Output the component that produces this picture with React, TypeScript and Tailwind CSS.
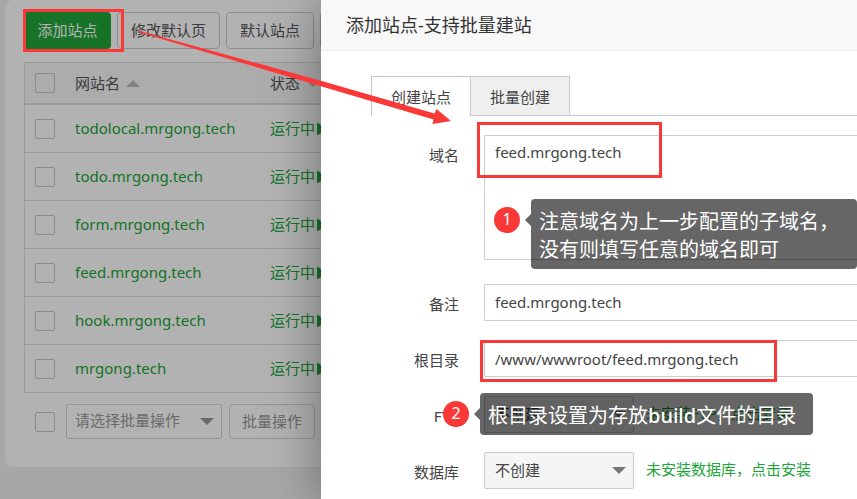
import React from "react";

const sites = [
  "todolocal.mrgong.tech",
  "todo.mrgong.tech",
  "form.mrgong.tech",
  "feed.mrgong.tech",
  "hook.mrgong.tech",
  "mrgong.tech",
];

function Checkbox({ label }: { label: string }) {
  return (
    <input
      type="checkbox"
      aria-label={label}
      className="block size-5 shrink-0 appearance-none rounded-xs border border-[#c8c8c8] checked:bg-[#20a53a]"
    />
  );
}

function Caret({ up = false, className = "" }: { up?: boolean; className?: string }) {
  return (
    <svg viewBox="0 0 14 7" className={`h-[7px] w-3.5 ${className}`} aria-hidden="true">
      <path d={up ? "M0 7L7 0L14 7Z" : "M0 0H14L7 7Z"} fill="currentColor" />
    </svg>
  );
}

function ToolButton({ children }: { children: React.ReactNode }) {
  return (
    <button type="button" className="h-[37px] rounded border border-[#ccc] px-[13px] text-[#555]">
      {children}
    </button>
  );
}

function SitesPage() {
  return (
    <main className="ml-[5px] rounded-lg bg-white pt-3 pb-7 pl-[19px] text-[15px]">
      <div className="flex gap-1.5 whitespace-nowrap">
        <button type="button" className="h-[37px] w-[87px] rounded bg-[#20a53a] text-white">
          添加站点
        </button>
        <ToolButton>修改默认页</ToolButton>
        <ToolButton>默认站点</ToolButton>
        <ToolButton>PHP命令行版本</ToolButton>
      </div>

      <table className="mt-[13px] w-full table-fixed border-separate border-spacing-0 border-t border-l border-[#ddd] text-left">
        <colgroup>
          <col className="w-[50px]" />
          <col className="w-[195px]" />
          <col />
        </colgroup>
        <thead className="bg-[#f6f6f6] text-[#555]">
          <tr className="h-[42px]">
            <th className="border-b-2 border-[#ddd] pl-2.5">
              <Checkbox label="全选" />
            </th>
            <th className="border-b-2 border-[#ddd] font-normal">
              <span className="flex items-center gap-1.5">
                网站名
                <Caret up className="text-[#bbb]" />
              </span>
            </th>
            <th className="border-b-2 border-[#ddd] font-normal">
              <span className="flex items-center gap-1.5">
                状态
                <Caret className="text-[#bbb]" />
              </span>
            </th>
          </tr>
        </thead>
        <tbody className="text-[#20a53a]">
          {sites.map((site) => (
            <tr key={site} className="h-12">
              <td className="border-b border-[#ddd] pl-2.5">
                <Checkbox label={site} />
              </td>
              <td className="border-b border-[#ddd]">
                <a href="#site">{site}</a>
              </td>
              <td className="border-b border-[#ddd]">
                <a href="#status" className="flex items-center gap-0.5">
                  运行中
                  <svg viewBox="0 0 10 12" className="h-3 w-2.5" aria-hidden="true">
                    <path d="M0 0H1L10 6L1 12H0Z" fill="currentColor" />
                  </svg>
                </a>
              </td>
            </tr>
          ))}
        </tbody>
      </table>

      <div className="mt-[11px] flex items-center pl-[11px] whitespace-nowrap">
        <Checkbox label="选择全部站点" />
        <div className="relative ml-[11px]">
          <select
            aria-label="批量操作类型"
            className="h-[35px] w-[156px] appearance-none rounded-xs border border-[#d4d4d4] pb-0.5 pl-2 text-[#999]"
          >
            <option>请选择批量操作</option>
          </select>
          <Caret className="pointer-events-none absolute top-3.5 right-2 text-[#999]" />
        </div>
        <button
          type="button"
          className="ml-[7px] h-[35px] rounded border border-[#d4d4d4] px-3 text-[#999]"
        >
          批量操作
        </button>
      </div>
    </main>
  );
}

function Field({
  id,
  label,
  children,
}: {
  id: string;
  label: string;
  children: React.ReactNode;
}) {
  return (
    <div className="mb-[19px] flex">
      <label htmlFor={id} className="mr-[25px] w-[138px] shrink-0 pt-2 text-right leading-6">
        {label}
      </label>
      {children}
    </div>
  );
}

function InstallSelect({ id, hint }: { id: string; hint: string }) {
  return (
    <div className="flex whitespace-nowrap">
      <div className="relative">
        <select
          id={id}
          className="h-[37px] w-[150px] appearance-none rounded-xs border border-[#ccc] bg-[#f5f5f5] pl-2.5"
        >
          <option>不创建</option>
        </select>
        <Caret className="pointer-events-none absolute top-[15px] right-2 text-[#777]" />
      </div>
      <a href="#install" className="ml-3 pt-[5px] leading-6 text-[#20a53a]">
        {hint}
      </a>
    </div>
  );
}

function AddSiteDialog() {
  return (
    <section
      role="dialog"
      aria-label="添加站点"
      className="ml-[321px] min-w-0 flex-1 bg-white text-[15px] text-[#444] shadow-[1px_1px_50px_rgba(0,0,0,0.4)]"
    >
      <h1 className="h-[51px] border-b border-[#eee] bg-[#f8f8f8] pl-[25px] text-lg leading-[51px] text-[#333]">
        添加站点-支持批量建站
      </h1>
      <div className="mt-[25px] ml-[50px] flex h-10">
        <button type="button" className="w-[99px] border-t border-l border-[#c5c5d8] pt-0.5">
          创建站点
        </button>
        <button type="button" className="w-[100px] border border-[#c5c5d8] bg-[#efefef] pt-0.5">
          批量创建
        </button>
        <div className="flex-1 border-b border-[#c5c5d8]" />
      </div>
      <form className="pt-[19px]">
        <div className="mb-6 flex">
          <label htmlFor="domain" className="mr-[25px] w-[138px] shrink-0 pt-2 text-right leading-6">
            域名
          </label>
          <textarea
            id="domain"
            defaultValue="feed.mrgong.tech"
            className="h-[125px] min-w-0 flex-1 resize-none rounded-l-xs border border-r-0 border-[#ccc] px-2.5 pt-1 leading-6"
          />
        </div>
        <Field id="remark" label="备注">
          <input
            id="remark"
            defaultValue="feed.mrgong.tech"
            className="h-[37px] min-w-0 flex-1 rounded-l-xs border border-r-0 border-[#ccc] px-2.5 pb-0.5"
          />
        </Field>
        <Field id="root-dir" label="根目录">
          <input
            id="root-dir"
            defaultValue="/www/wwwroot/feed.mrgong.tech"
            className="h-[37px] min-w-0 flex-1 rounded-l-xs border border-r-0 border-[#ccc] px-2.5"
          />
        </Field>
        <Field id="ftp" label="FTP">
          <InstallSelect id="ftp" hint="未安装FTP，点击安装" />
        </Field>
        <Field id="database" label="数据库">
          <InstallSelect id="database" hint="未安装数据库，点击安装" />
        </Field>
      </form>
    </section>
  );
}

function Note({
  step,
  className,
  children,
}: {
  step: number;
  className: string;
  children: React.ReactNode;
}) {
  return (
    <div className={`absolute flex whitespace-nowrap ${className}`}>
      <span className="mt-2 size-[26px] rounded-full bg-[#fb3838] text-center text-base leading-6 text-white">
        {step}
      </span>
      <svg viewBox="0 0 6 12" className="mt-[15px] ml-[5px] h-3 w-1.5" aria-hidden="true">
        <path d="M6 0V12L0 6Z" fill="black" fillOpacity="0.6" />
      </svg>
      <p className="rounded-sm bg-black/60 px-2 pt-[9px] pb-[5px] text-xl leading-7 text-white">
        {children}
      </p>
    </div>
  );
}

function Annotations() {
  return (
    <div className="pointer-events-none absolute inset-0">
      <div className="absolute top-[9px] left-[23px] h-[43px] w-[101px] border-3 border-[#fb3838]" />
      <div className="absolute top-[122px] left-[477px] h-14 w-[185px] border-3 border-[#fb3838]" />
      <div className="absolute top-[340px] left-[480px] h-[42px] w-[297px] border-3 border-[#fb3838]" />
      <svg viewBox="0 0 460 130" className="absolute top-0 left-0 h-[130px] w-[460px]" aria-hidden="true">
        <path
          d="M138 30.5L320 80.5L434.5 113.5L436.5 109L451 121L432.5 124L433.5 119.5L320 86L138 32Z"
          fill="#fb3838"
        />
      </svg>
      <Note step={1} className="top-[199px] left-[494px]">
        <span className="block w-[310px]">
          注意域名为上一步配置的子域名，
          <br />
          没有则填写任意的域名即可
        </span>
      </Note>
      <Note step={2} className="top-[393px] left-[443px]">
        <span className="block w-[317px]">
          根目录设置为存放<span className="font-medium">build</span>文件的目录
        </span>
      </Note>
    </div>
  );
}

export default function App() {
  return (
    <div className="relative min-h-screen overflow-hidden bg-[#f0f0f0] font-['Noto_Sans','Noto_Sans_CJK_SC',sans-serif]">
      <SitesPage />
      <div className="absolute inset-0 flex bg-black/30">
        <AddSiteDialog />
      </div>
      <Annotations />
    </div>
  );
}
